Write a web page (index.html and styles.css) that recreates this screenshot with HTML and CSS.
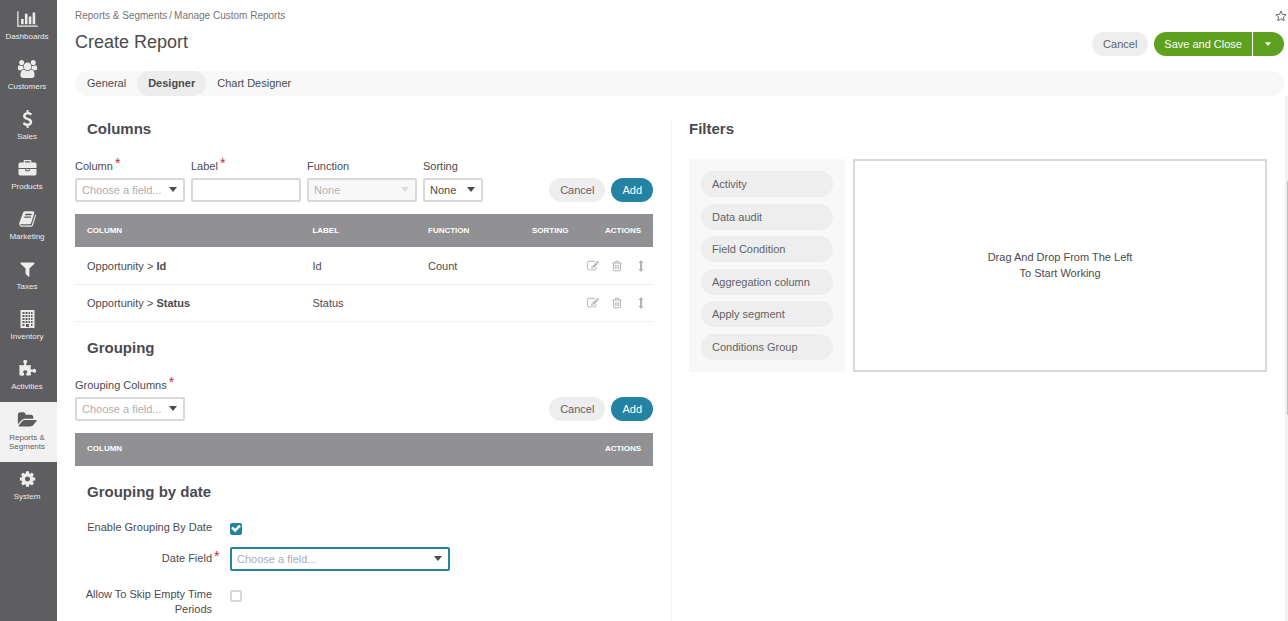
FILE: index.html
```html
<!DOCTYPE html>
<html lang="en">
<head>
<meta charset="utf-8">
<title>Create Report</title>
<link rel="stylesheet" href="styles.css">
</head>
<body>
<svg class="defs" aria-hidden="true">
  <symbol id="caret" viewBox="0 0 8 5"><path d="M0 0h8L4 5z"/></symbol>
  <symbol id="edit" viewBox="0 0 1792 1792"><path d="M888 1184l116-116-152-152-116 116v56h96v96h56zm440-720q-16-16-33 1l-350 350q-17 17-1 33t33-1l350-350q17-17 1-33zm80 594v190q0 119-84.500 203.500t-203.500 84.500h-832q-119 0-203.500-84.500t-84.500-203.500v-832q0-119 84.500-203.500t203.500-84.500h832q63 0 117 25 15 7 18 23 3 17-9 29l-49 49q-14 14-32 8-23-6-45-6h-832q-66 0-113 47t-47 113v832q0 66 47 113t113 47h832q66 0 113-47t47-113v-126q0-13 9-22l64-64q15-15 35-7t20 29zm-96-738l288 288-672 672h-288v-288zm444 132l-92 92-288-288 92-92q28-28 68-28t68 28l152 152q28 28 28 68t-28 68z"/></symbol>
  <symbol id="trash" viewBox="0 0 1792 1792"><path d="M704 736v576q0 14-9 23t-23 9h-64q-14 0-23-9t-9-23v-576q0-14 9-23t23-9h64q14 0 23 9t9 23zm256 0v576q0 14-9 23t-23 9h-64q-14 0-23-9t-9-23v-576q0-14 9-23t23-9h64q14 0 23 9t9 23zm256 0v576q0 14-9 23t-23 9h-64q-14 0-23-9t-9-23v-576q0-14 9-23t23-9h64q14 0 23 9t9 23zm128 724v-948h-896v948q0 22 7 40.500t14.500 27 10.500 8.500h832q3 0 10.500-8.500t14.500-27 7-40.500zm-672-1076h448l-48-117q-7-9-17-11h-317q-10 2-17 11zm928 32v64q0 14-9 23t-23 9h-96v948q0 83-47 143.500t-113 60.500h-832q-66 0-113-58.500t-47-141.500v-952h-96q-14 0-23-9t-9-23v-64q0-14 9-23t23-9h309l70-167q15-37 54-63t79-26h320q40 0 79 26t54 63l70 167h309q14 0 23 9t9 23z"/></symbol>
  <symbol id="move" viewBox="0 0 12 12"><path d="M6 0l2.500 3H7v6h1.500L6 12 3.500 9H5V3H3.500z"/></symbol>
</svg>
<div class="app">
  <nav class="sidebar" aria-label="Main">
    <a class="nav-item" href="#"><svg viewBox="0 0 2048 1792"><path d="M640 896v512h-256v-512h256zm384-512v1024h-256v-1024h256zm1024 1152v128h-2048v-1536h128v1408h1920zm-640-896v768h-256v-768h256zm384-384v1152h-256v-1152h256z"/></svg><span>Dashboards</span></a>
    <a class="nav-item" href="#"><svg viewBox="0 0 1920 1792"><path d="M593 896q-162 5-265 128h-134q-82 0-138-40.500t-56-118.500q0-353 124-353 6 0 43.500 21t97.500 42.500 119 21.500q67 0 133-23-5 37-5 66 0 139 81 256zm1071 637q0 120-73 189.500t-194 69.500h-874q-121 0-194-69.500t-73-189.500q0-53 3.500-103.500t14-109 26.500-108.500 43-97.500 62-81 85.500-53.500 111.500-20q10 0 43 21.500t73 48 107 48 135 21.500 135-21.500 107-48 73-48 43-21.500q61 0 111.500 20t85.500 53.500 62 81 43 97.500 26.500 108.500 14 109 3.500 103.500zm-1024-1277q0 106-75 181t-181 75-181-75-75-181 75-181 181-75 181 75 75 181zm704 384q0 159-112.500 271.500t-271.500 112.500-271.500-112.500-112.500-271.500 112.500-271.500 271.500-112.500 271.500 112.500 112.500 271.500zm576 225q0 78-56 118.500t-138 40.500h-134q-103-123-265-128 81-117 81-256 0-29-5-66 66 23 133 23 59 0 119-21.500t97.500-42.500 43.500-21q124 0 124 353zm-128-609q0 106-75 181t-181 75-181-75-75-181 75-181 181-75 181 75 75 181z"/></svg><span>Customers</span></a>
    <a class="nav-item" href="#"><svg viewBox="0 0 1792 1792"><path d="M1362 1185q0 153-99.500 263.500t-258.500 136.500v175q0 14-9 23t-23 9h-135q-13 0-22.500-9.500t-9.500-22.500v-175q-66-9-127.500-31t-101.500-44.500-74-48-46.500-37.500-17.500-18q-17-21-2-41l103-135q7-10 23-12 15-2 24 9l2 2q113 99 243 125 37 8 74 8 81 0 142.500-43t61.500-122q0-28-15-53t-33.500-42-58.500-37.500-66-32-80-32.500q-39-16-61.500-25t-61.500-26.500-62.500-31-56.500-35.500-53.500-42.500-43.500-49-35.500-58-21-66.500-8.500-78q0-138 98-242t255-134v-180q0-13 9.500-22.500t22.500-9.500h135q14 0 23 9t9 23v176q57 6 110.500 23t87 33.500 63.500 37.500 39 29 15 14q17 18 5 38l-81 146q-8 15-23 16-14 3-27-7-3-3-14.500-12t-39-26.500-58.500-32-74.500-26-85.500-11.500q-95 0-155 43t-60 111q0 26 8.500 48t29.500 41.500 39.500 33 56 31 60.500 27 70 27.500q53 20 81 31.500t76 35 75.500 42.500 62 50 53 63.500 31.500 76.500 13 94z"/></svg><span>Sales</span></a>
    <a class="nav-item" href="#"><svg viewBox="0 0 1792 1792"><path d="M640 256h512v-128h-512v128zm1152 640v480q0 66-47 113t-113 47h-1472q-66 0-113-47t-47-113v-480h672v160q0 26 19 45t45 19h320q26 0 45-19t19-45v-160h672zm-768 0v128h-256v-128h256zm768-480v384h-1792v-384q0-66 47-113t113-47h352v-160q0-40 28-68t68-28h576q40 0 68 28t28 68v160h352q66 0 113 47t47 113z"/></svg><span>Products</span></a>
    <a class="nav-item" href="#"><svg viewBox="0 0 1792 1792"><path d="M1703 478q40 57 18 129l-275 906q-19 64-76.500 107.500t-122.500 43.500h-923q-77 0-148.500-53.500t-99.500-131.500q-24-67-2-127 0-4 3-27t4-37q1-8-3-21.500t-3-19.500q2-11 8-21t16.500-23.500 16.500-23.500q23-38 45-91.500t30-91.500q3-10 .5-30t-.5-28q3-11 17-28t17-23q21-36 42-92t25-90q1-9-2.500-32t.5-28q4-13 22-30.500t22-22.500q19-26 42.500-84.500t27.500-96.500q1-8-3-25.500t-2-26.500q2-8 9-18t18-23 17-21q8-12 16.500-30.500t15-35 16-36 19.500-32 26.500-23.500 36-11.500 47.500 5.500l-1 3q38-9 51-9h761q74 0 114 56t18 130l-274 906q-36 119-71.500 153.500t-128.500 34.500h-869q-27 0-38 15-11 16-1 43 24 70 144 70h923q29 0 56-15.500t35-41.500l300-987q7-22 5-57 38 15 59 43zm-1064 2q-4 13 2 22.500t20 9.500h608q13 0 25.500-9.500t16.500-22.500l21-64q4-13-2-22.500t-20-9.500h-608q-13 0-25.500 9.500t-16.500 22.500zm-83 256q-4 13 2 22.500t20 9.500h608q13 0 25.500-9.500t16.500-22.500l21-64q4-13-2-22.500t-20-9.500h-608q-13 0-25.500 9.500t-16.500 22.500z"/></svg><span>Marketing</span></a>
    <a class="nav-item" href="#"><svg viewBox="0 0 1792 1792"><path d="M1595 295q17 41-14 70l-493 493v742q0 42-39 59-13 5-25 5-27 0-45-19l-256-256q-19-19-19-45v-486l-493-493q-31-29-14-70 17-39 59-39h1280q42 0 59 39z"/></svg><span>Taxes</span></a>
    <a class="nav-item" href="#"><svg viewBox="0 0 18 18"><path fill-rule="evenodd" d="M2 0h14v18H2zM4 2v2h2V2zM7 2v2h2V2zM10 2v2h1.500V2zM12.500 2v2H14V2zM4 5v2h2V5zM7 5v2h2V5zM10 5v2h1.500V5zM12.500 5v2H14V5zM4 8v2h2V8zM7 8v2h2V8zM10 8v2h1.500V8zM12.500 8v2H14V8zM4 11v2h2v-2zM7 11v2h2v-2zM10 11v2h1.500v-2zM12.500 11v2H14v-2zM4 14v2h2v-2zM7.500 14v3h3v-3zM12.500 14v2H14v-2z"/></svg><span>Inventory</span></a>
    <a class="nav-item" href="#"><svg viewBox="0 0 1792 1792"><path d="M1755 1083q0 81-44.500 135t-123.500 54q-41 0-77.500-17.500t-59-38-56.500-38-71-17.500q-110 0-110 124 0 39 16 115t15 115v5q-22 0-33 1-34 3-97.500 11.500t-115.500 13.500-98 5q-61 0-103-26.500t-42-83.500q0-37 17.500-71t38-56.500 38-59 17.500-77.500q0-79-54-123.500t-135-44.500q-84 0-143 45.500t-59 127.500q0 43 15 83t33.500 64.500 33.500 53 15 50.500q0 45-46 89-37 35-117 35-95 0-245-24-9-2-27.500-4t-27.500-4l-13-2q-1 0-3-1-2 0-2-1v-1024q2 1 17.500 3.500t34 5 21.500 3.500q150 24 245 24 80 0 117-35 46-44 46-89 0-22-15-50.500t-33.500-53-33.500-64.500-15-83q0-82 59-127.500t144-45.500q80 0 134 44.500t54 123.500q0 41-17.500 77.500t-38 59-38 56.500-17.500 71q0 57 42 83.500t103 26.500q64 0 180-15t163-17v2q-1 2-3.500 17.500t-5 34-3.500 21.500q-24 150-24 245 0 80 35 117 44 46 89 46 22 0 50.500-15t53-33.500 64.500-33.500 83-15q82 0 127.500 59t45.500 143z"/></svg><span>Activities</span></a>
    <a class="nav-item nav-item-active" href="#" aria-current="page"><svg viewBox="0 0 1920 1792"><path d="M1879 952q0 31-31 66l-336 396q-43 51-120.500 86.500t-143.500 35.500h-1088q-34 0-60.500-13t-26.500-43q0-31 31-66l336-396q43-51 120.500-86.500t143.500-35.500h1088q34 0 60.500 13t26.500 43zm-343-344v160h-832q-94 0-197 47.500t-164 119.500l-337 396-5 6q0-4-.5-12.500t-.5-12.500v-960q0-92 66-158t158-66h320q92 0 158 66t66 158v32h544q92 0 158 66t66 158z"/></svg><span>Reports &amp;<br>Segments</span></a>
    <a class="nav-item" href="#"><svg viewBox="0 0 1792 1792"><path d="M1152 896q0-106-75-181t-181-75-181 75-75 181 75 181 181 75 181-75 75-181zm512-109v222q0 12-8 23t-20 13l-185 28q-19 54-39 91 35 50 107 138 10 12 10 25t-9 23q-27 37-99 108t-94 71q-12 0-26-9l-138-108q-44 23-91 38-16 136-29 186-7 28-36 28h-222q-14 0-24.500-8.500t-11.500-21.500l-28-184q-49-16-90-37l-141 107q-10 9-25 9-14 0-25-11-126-114-165-168-7-10-7-23 0-12 8-23 15-21 51-66.500t54-70.500q-27-50-41-99l-183-27q-13-2-21-12.500t-8-23.500v-222q0-12 8-23t19-13l186-28q14-46 39-92-40-57-107-138-10-12-10-24 0-10 9-23 26-36 98.500-107.500t94.500-71.500q13 0 26 10l138 107q44-23 91-38 16-136 29-186 7-28 36-28h222q14 0 24.500 8.500t11.500 21.500l28 184q49 16 90 37l142-107q9-9 24-9 13 0 25 10 129 119 165 170 7 8 7 22 0 12-8 23-15 21-51 66.500t-54 70.500q26 50 41 98l183 28q13 2 21 12.500t8 23.500z"/></svg><span>System</span></a>
  </nav>

  <main class="main">
    <header class="header">
      <div class="crumb-row">
        <div class="crumbs"><a href="#">Reports &amp; Segments</a><span>/</span><a href="#">Manage Custom Reports</a></div>
        <button class="star" type="button" aria-label="Add to favorites"><svg viewBox="0 0 12 12"><path d="M6 1l1.500 3.300 3.600.4-2.700 2.400.8 3.600L6 8.900l-3.200 1.800.8-3.600L.9 4.700l3.600-.4z"/></svg></button>
      </div>
      <div class="title-row">
        <h1>Create Report</h1>
        <div class="actions">
          <button class="btn" type="button">Cancel</button>
          <div class="split">
            <button class="btn btn-save" type="button">Save and Close</button>
            <button class="btn btn-more" type="button" aria-label="More save options"><svg><use href="#caret"/></svg></button>
          </div>
        </div>
      </div>
      <nav class="tabs" aria-label="Report sections">
        <a href="#">General</a>
        <a class="tab-active" href="#" aria-current="page">Designer</a>
        <a href="#">Chart Designer</a>
      </nav>
    </header>

    <div class="body">
      <div class="pane pane-left">
        <section>
          <h2>Columns</h2>
          <div class="field-row">
            <div class="field">
              <label for="column">Column<span class="req">*</span></label>
              <span class="select placeholder"><select id="column"><option>Choose a field...</option></select><svg><use href="#caret"/></svg></span>
            </div>
            <div class="field">
              <label for="label">Label<span class="req">*</span></label>
              <input class="text" id="label" type="text">
            </div>
            <div class="field">
              <label for="function">Function</label>
              <span class="select disabled"><select id="function" disabled><option>None</option></select><svg><use href="#caret"/></svg></span>
            </div>
            <div class="field field-small">
              <label for="sorting">Sorting</label>
              <span class="select"><select id="sorting"><option>None</option></select><svg><use href="#caret"/></svg></span>
            </div>
            <div class="actions">
              <button class="btn" type="button">Cancel</button>
              <button class="btn btn-add" type="button">Add</button>
            </div>
          </div>
          <table>
            <thead><tr><th class="c-column">Column</th><th class="c-label">Label</th><th class="c-function">Function</th><th class="c-sorting">Sorting</th><th class="c-actions">Actions</th></tr></thead>
            <tbody>
              <tr><td>Opportunity &gt; <b>Id</b></td><td>Id</td><td>Count</td><td></td>
                <td class="tools"><div><button type="button" aria-label="Edit"><svg><use href="#edit"/></svg></button><button type="button" aria-label="Delete"><svg><use href="#trash"/></svg></button><button type="button" aria-label="Move"><svg><use href="#move"/></svg></button></div></td></tr>
              <tr><td>Opportunity &gt; <b>Status</b></td><td>Status</td><td></td><td></td>
                <td class="tools"><div><button type="button" aria-label="Edit"><svg><use href="#edit"/></svg></button><button type="button" aria-label="Delete"><svg><use href="#trash"/></svg></button><button type="button" aria-label="Move"><svg><use href="#move"/></svg></button></div></td></tr>
            </tbody>
          </table>
        </section>

        <section>
          <h2>Grouping</h2>
          <div class="field-row">
            <div class="field">
              <label for="grouping">Grouping Columns<span class="req">*</span></label>
              <span class="select placeholder"><select id="grouping"><option>Choose a field...</option></select><svg><use href="#caret"/></svg></span>
            </div>
            <div class="actions">
              <button class="btn" type="button">Cancel</button>
              <button class="btn btn-add" type="button">Add</button>
            </div>
          </div>
          <table>
            <thead><tr><th>Column</th><th class="c-actions">Actions</th></tr></thead>
          </table>
        </section>

        <section>
          <h2>Grouping by date</h2>
          <div class="form">
            <label for="enable">Enable Grouping By Date</label>
            <input id="enable" type="checkbox" checked>
            <label for="date">Date Field<span class="req">*</span></label>
            <span class="select placeholder focused"><select id="date"><option>Choose a field...</option></select><svg><use href="#caret"/></svg></span>
            <label for="skip">Allow To Skip Empty Time Periods</label>
            <input id="skip" type="checkbox">
          </div>
        </section>
      </div>

      <section class="pane pane-right">
        <h2>Filters</h2>
        <div class="filters">
          <ul class="conditions">
            <li>Activity</li>
            <li>Data audit</li>
            <li>Field Condition</li>
            <li>Aggregation column</li>
            <li>Apply segment</li>
            <li>Conditions Group</li>
          </ul>
          <div class="drop">Drag And Drop From The Left<br>To Start Working</div>
        </div>
      </section>
      <div class="scroll-track"><div class="scroll-thumb"></div></div>
    </div>
  </main>
</div>
</body>
</html>
```
FILE: styles.css
```css
* { box-sizing: border-box; }
body {
  margin: 0;
  font: 11px/16px "Liberation Sans", Arial, sans-serif;
  color: #4b4b4e;
  background: #fff;
}
a { color: inherit; text-decoration: none; }
button, input, select { font: inherit; color: inherit; margin: 0; }
button { border: 0; padding: 0; background: none; }
svg { fill: currentColor; display: block; }
.defs { display: none; }

.app { display: flex; height: 100vh; overflow: hidden; }

.sidebar {
  flex: none;
  width: 57px;
  padding-top: 2px;
  background: #5e5e60;
  color: #ececec;
}
.nav-item {
  display: flex;
  flex-direction: column;
  align-items: center;
  gap: 4px;
  padding: 8px 3px 11px 0;
  font-size: 8px;
  line-height: 9px;
  text-align: center;
}
.nav-item svg { height: 18px; width: 21px; }
.nav-item-active { padding-top: 9px; background: #f2f2f2; color: #5e5e60; }

.main { flex: 1; min-width: 0; display: flex; flex-direction: column; }
.header { padding: 8px 4px 0 18px; }
.crumb-row {
  display: flex;
  justify-content: space-between;
  font-size: 10px;
  color: #747477;
}
.crumbs span { padding: 0 2px; }
.star { margin-right: -3px; }
.star svg { width: 12px; height: 12px; fill: none; stroke: #5e6678; }
.title-row { display: flex; justify-content: space-between; align-items: center; margin-top: 8px; height: 24px; }
h1 { margin: 0; padding-bottom: 4px; font-size: 18px; line-height: 20px; font-weight: 400; }
.actions { display: flex; gap: 6px; margin-left: auto; }
.btn {
  height: 24px;
  padding: 0 11px;
  border-radius: 12px;
  background: #eee;
  color: #626265;
  line-height: 24px;
}
.split { display: flex; gap: 1px; }
.btn-save, .btn-more { background: #5da11f; color: #fff; }
.btn-save { border-radius: 12px 0 0 12px; padding: 0 10px; }
.btn-more { border-radius: 0 12px 12px 0; padding: 0 13px 0 12px; }
.btn-more svg { width: 6px; height: 4px; }
.btn-add { background: #2483a2; color: #fff; }

.tabs { display: flex; margin-top: 15px; padding-left: 1px; border-radius: 13px; background: #f8f8f8; }
.tabs a { padding: 0 11px; line-height: 25px; border-radius: 13px; }
.tabs .tab-active { background: #ededed; font-weight: 700; }

.body { flex: 1; min-height: 0; display: flex; }
.pane { box-sizing: content-box; flex: 1 1 0; min-width: 0; margin-top: 24px; }
.pane-left { padding: 0 18px; border-right: 1px solid #f3f3f3; }
.pane-right { padding: 0 18px 0 17px; }
h2 { margin: 0; padding-left: 12px; font-size: 15px; line-height: 18px; }
.pane-right h2 { padding-left: 0; }
section + section { padding-top: 17px; }

.field-row { display: flex; align-items: flex-end; gap: 6px; margin-top: 21px; }
.field { width: 110px; }
.field-small { width: 60px; }
.field label { display: block; margin-bottom: 4px; line-height: 15px; white-space: nowrap; }
.req { margin-left: 2px; font-size: 14px; line-height: 0; vertical-align: 2px; color: #c6283d; }
.select { position: relative; display: block; }
.select select, .text {
  display: block;
  width: 100%;
  height: 24px;
  padding: 0 5px;
  border: 2px solid #d9d9d9;
  border-radius: 2px;
  background: #fff;
  appearance: none;
  outline: 0;
}
.select select { color: #4b4b4e; opacity: 1; }
.select svg {
  position: absolute;
  right: 8px;
  top: 9px;
  width: 8px;
  height: 5px;
  pointer-events: none;
}
.placeholder select { color: #aeaeb1; }
.disabled select { color: #b5b5b8; background: #f8f8f8; }
.disabled svg { color: #dcdcde; }
.focused select { border-color: #2483a2; }

table { width: 100%; margin-top: 12px; border-collapse: collapse; table-layout: fixed; }
th, td { padding: 0 0 0 12px; text-align: left; }
th {
  height: 33px;
  background: #919193;
  color: #fff;
  font-size: 8px;
  text-transform: uppercase;
}
td { height: 37px; padding-top: 1px; border-bottom: 1px solid #f0f0f0; }
.c-column { width: 39%; }
.c-label { width: 20%; }
.c-function { width: 18%; }
.c-sorting { width: 10%; }
th.c-actions { text-align: right; padding-right: 12px; }
td.tools { padding: 1px 0 0; }
.tools div { display: flex; justify-content: flex-end; }
.tools button { display: flex; justify-content: center; width: 24px; color: #b2b2b5; }
.tools svg { width: 12px; height: 12px; }

.form {
  display: grid;
  grid-template-columns: 137px 220px;
  column-gap: 18px;
  row-gap: 12px;
  align-items: start;
  margin-top: 15px;
}
.form label { position: relative; padding-top: 4px; line-height: 15px; text-align: right; }
.form .req { position: absolute; left: 100%; top: 9px; }
input[type="checkbox"] {
  appearance: none;
  width: 12px;
  height: 12px;
  margin-top: 7px;
  border: 2px solid #d9d9d9;
  border-radius: 2px;
  background: #fff;
}
input[type="checkbox"]:checked { border: 0; background: #2483a2; }
input[type="checkbox"]:checked::before {
  content: "";
  display: block;
  height: 12px;
  background: #fff;
  clip-path: polygon(10% 48%, 24% 34%, 42% 52%, 76% 18%, 91% 33%, 42% 81%);
}

.filters { display: flex; gap: 8px; margin-top: 21px; }
.conditions {
  display: flex;
  flex-direction: column;
  justify-content: space-between;
  flex: none;
  width: 27%;
  margin: 0;
  padding: 12px;
  list-style: none;
  background: #f8f8f8;
}
.conditions li {
  padding: 0 11px;
  border-radius: 13px;
  background: #eee;
  color: #626265;
  line-height: 26px;
  white-space: nowrap;
}
.drop {
  flex: 1;
  display: flex;
  align-items: center;
  justify-content: center;
  min-height: 213px;
  padding-bottom: 2px;
  border: 2px solid #d9d9d9;
  text-align: center;
}
.scroll-track { flex: none; width: 3px; padding: 85px 0 0 2px; background: #f1f1f1; }
.scroll-thumb { height: 234px; background: #c1c1c1; }
```
